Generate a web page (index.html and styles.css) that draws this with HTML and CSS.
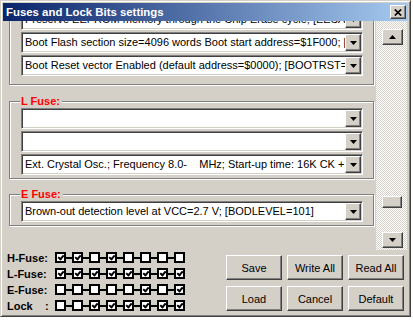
FILE: index.html
```html
<!DOCTYPE html>
<html lang="en">
<head>
  <meta charset="UTF-8" />
  <title>Fuses and Lock Bits settings</title>
  <link rel="stylesheet" href="styles.css">
</head>
<body>

  <div class="window">
    <div class="titlebar">
      <span class="title">Fuses and Lock Bits settings</span>
      <button class="close-btn" title="Close">
        <svg width="8" height="7" viewBox="0 0 8 7"><path d="M0.8 0.5 L7.2 6.5 M7.2 0.5 L0.8 6.5" stroke="#000" stroke-width="1.7" fill="none"/></svg>
      </button>
    </div>

    <div class="main">
      <div class="pane">
        <div class="pane-content">

          <div class="group group-h">
            <div class="group-title">H Fuse:</div>
            <div class="combo"><div class="combo-text">Preserve EEPROM memory through the Chip Erase cycle; [EESAVE=0]</div><div class="combo-btn"><svg width="7" height="4" viewBox="0 0 7 4"><path d="M0 0h7L3.5 4z"/></svg></div></div>
            <div class="combo"><div class="combo-text">Boot Flash section size=4096 words Boot start address=$1F000; [BOOTSZ=00]</div><div class="combo-btn"><svg width="7" height="4" viewBox="0 0 7 4"><path d="M0 0h7L3.5 4z"/></svg></div></div>
            <div class="combo"><div class="combo-text">Boot Reset vector Enabled (default address=$0000); [BOOTRST=0]</div><div class="combo-btn"><svg width="7" height="4" viewBox="0 0 7 4"><path d="M0 0h7L3.5 4z"/></svg></div></div>
          </div>

          <div class="group">
            <div class="group-title">L Fuse:</div>
            <div class="combo"><div class="combo-text"></div><div class="combo-btn"><svg width="7" height="4" viewBox="0 0 7 4"><path d="M0 0h7L3.5 4z"/></svg></div></div>
            <div class="combo"><div class="combo-text"></div><div class="combo-btn"><svg width="7" height="4" viewBox="0 0 7 4"><path d="M0 0h7L3.5 4z"/></svg></div></div>
            <div class="combo"><div class="combo-text">Ext. Crystal Osc.; Frequency 8.0-    MHz; Start-up time: 16K CK +</div><div class="combo-btn"><svg width="7" height="4" viewBox="0 0 7 4"><path d="M0 0h7L3.5 4z"/></svg></div></div>
          </div>

          <div class="group">
            <div class="group-title">E Fuse:</div>
            <div class="combo"><div class="combo-text">Brown-out detection level at VCC=2.7 V; [BODLEVEL=101]</div><div class="combo-btn"><svg width="7" height="4" viewBox="0 0 7 4"><path d="M0 0h7L3.5 4z"/></svg></div></div>
          </div>

        </div>
      </div>

      <div class="scrollbar">
        <div class="sb-btn"><svg width="7" height="4" viewBox="0 0 7 4"><path d="M0 4h7L3.5 0z"/></svg></div>
        <div class="sb-thumb"></div>
        <div class="sb-btn"><svg width="7" height="4" viewBox="0 0 7 4"><path d="M0 0h7L3.5 4z"/></svg></div>
      </div>
    </div>

    <div class="bottom">
      <div class="bits">
        <div class="bit-row">
          <span class="bit-label">H-Fuse:</span>
          <div class="bit-boxes">
            <span class="bit on"></span><span class="bit on"></span><span class="bit"></span><span class="bit on"></span>
            <span class="bit"></span><span class="bit"></span><span class="bit"></span><span class="bit"></span>
          </div>
        </div>
        <div class="bit-row">
          <span class="bit-label">L-Fuse:</span>
          <div class="bit-boxes">
            <span class="bit on"></span><span class="bit on"></span><span class="bit on"></span><span class="bit on"></span>
            <span class="bit on"></span><span class="bit on"></span><span class="bit on"></span><span class="bit on"></span>
          </div>
        </div>
        <div class="bit-row">
          <span class="bit-label">E-Fuse:</span>
          <div class="bit-boxes">
            <span class="bit"></span><span class="bit"></span><span class="bit"></span><span class="bit"></span>
            <span class="bit"></span><span class="bit on"></span><span class="bit"></span><span class="bit on"></span>
          </div>
        </div>
        <div class="bit-row">
          <span class="bit-label">Lock    :</span>
          <div class="bit-boxes">
            <span class="bit"></span><span class="bit"></span><span class="bit on"></span><span class="bit on"></span>
            <span class="bit on"></span><span class="bit on"></span><span class="bit on"></span><span class="bit on"></span>
          </div>
        </div>
      </div>

      <div class="actions">
        <button class="btn">Save</button>
        <button class="btn">Write All</button>
        <button class="btn">Read All</button>
        <button class="btn">Load</button>
        <button class="btn">Cancel</button>
        <button class="btn">Default</button>
      </div>
    </div>
  </div>

</body>
</html>
```

FILE: styles.css
```css
html, body {
  margin: 0;
  padding: 0;
  background: #fff;
  font-family: 'Liberation Sans', Arial, sans-serif;
  font-size: 11px;
  color: #000;
}

.window {
  width: 411px;
  height: 317px;
  box-sizing: border-box;
  border: 1px solid;
  border-color: #d4d0c8 #404040 #404040 #d4d0c8;
  box-shadow: inset 1px 1px #fff, inset -1px -1px #808080;
  padding: 2px;
  background: #d4d0c8;
  display: flex;
  flex-direction: column;
}

.titlebar {
  height: 18px;
  flex: none;
  display: flex;
  align-items: center;
  padding: 0 2px 0 3px;
  background: linear-gradient(to right, #0a246a, #a6caf0);
}

.title {
  color: #fff;
  font-weight: bold;
  font-size: 11.4px;
}

.close-btn {
  margin-left: auto;
  width: 16px;
  height: 14px;
  padding: 0;
  display: flex;
  align-items: center;
  justify-content: center;
  background: #d4d0c8;
  border: 1px solid;
  border-color: #fff #404040 #404040 #fff;
  box-shadow: inset -1px -1px #808080;
}

/* scrolled area with the fuse groups */
.main {
  display: flex;
  height: 229px;
  flex: none;
}

.pane {
  width: 373px;
  box-sizing: border-box;
  padding-left: 6px;
  overflow: hidden;
}

.pane-content {
  margin-top: -19px;
}

.group {
  width: 365px;
  box-sizing: border-box;
  border: 1px solid #808080;
  box-shadow: inset 1px 1px #fff, 1px 1px #fff;
  padding: 0 10px 3px 11px;
  margin-top: 15px;
}

.group-h {
  margin-top: 0;
  padding-bottom: 8px;
}

.group-h + .group {
  margin-top: 16px;
}

.group-title {
  display: block;
  width: max-content;
  margin: -7px 0 0 -1px;
  padding: 0 2px 0 1px;
  line-height: 13px;
  background: #d4d0c8;
  color: #ff0000;
  font-weight: bold;
}

.combo {
  display: flex;
  height: 21px;
  box-sizing: border-box;
  border: 1px solid;
  border-color: #808080 #fff #fff #808080;
  box-shadow: inset 1px 1px #404040, inset -1px -1px #d4d0c8;
  padding: 1px;
  background: #fff;
}

.combo + .combo {
  margin-top: 2px;
}

.combo-text {
  flex: 1;
  overflow: hidden;
  white-space: pre;
  line-height: 17px;
  padding-left: 2px;
}

.combo-btn,
.sb-btn,
.sb-thumb {
  box-sizing: border-box;
  background: #d4d0c8;
  border: 1px solid;
  border-color: #fff #404040 #404040 #fff;
  box-shadow: inset -1px -1px #808080;
}

.combo-btn {
  width: 16px;
  flex: none;
  display: flex;
  align-items: center;
  justify-content: center;
}

.scrollbar {
  width: 31px;
  box-sizing: border-box;
  padding: 8px 0 2px 6px;
  display: flex;
  flex-direction: column;
  background: repeating-conic-gradient(#d4d0c8 0 25%, #fff 0 50%) 0 0 / 2px 2px;
}

.sb-btn {
  width: 21px;
  height: 16px;
  display: flex;
  align-items: center;
  justify-content: center;
}

.sb-thumb {
  width: 20px;
  height: 12px;
  margin-top: auto;
  margin-bottom: 24px;
}

/* fuse bits and buttons */
.bottom {
  flex: 1;
  display: flex;
  padding: 2px 4px 0 4px;
}

.bits {
  display: flex;
  flex-direction: column;
  gap: 5px;
}

.bit-row {
  display: flex;
  align-items: center;
  height: 11px;
}

.bit-label {
  width: 48px;
  font-weight: bold;
  white-space: pre;
}

.bit-boxes {
  display: flex;
  gap: 6px;
  background: linear-gradient(#000, #000) center / 100% 2px no-repeat;
}

.bit {
  width: 11px;
  height: 11px;
  box-sizing: border-box;
  border: 2px solid #000;
  background: #fff;
  display: flex;
  align-items: center;
  justify-content: center;
}

.bit.on::after {
  content: "";
  width: 2px;
  height: 4px;
  border: solid #000;
  border-width: 0 2px 2px 0;
  transform: translate(0, -1px) rotate(40deg);
}

.actions {
  margin-left: auto;
  margin-top: 3px;
  display: grid;
  grid-template-columns: repeat(3, 56px);
  grid-auto-rows: 25px;
  column-gap: 5px;
  row-gap: 6px;
  align-content: start;
}

.btn {
  font-family: 'Liberation Sans', Arial, sans-serif;
  font-size: 11px;
  color: #000;
  padding: 0;
  background: #d4d0c8;
  border: 1px solid;
  border-color: #fff #404040 #404040 #fff;
  box-shadow: inset -1px -1px #808080;
}
```
